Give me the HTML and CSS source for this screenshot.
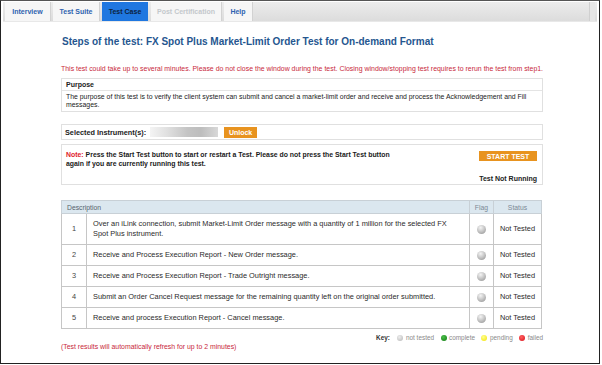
FILE: index.html
```html
<!DOCTYPE html>
<html>
<head>
<meta charset="utf-8">
<link rel="stylesheet" href="styles.css">
</head>
<body>
<div class="frame">
  <div class="tabbar">
    <a class="tab">Interview</a>
    <a class="tab">Test Suite</a>
    <a class="tab active">Test Case</a>
    <a class="tab disabled">Post Certification</a>
    <a class="tab">Help</a>
    <span class="tabbar-end"></span>
  </div>
  <div class="content">
    <h1 class="title">Steps of the test: FX Spot Plus Market-Limit Order Test for On-demand Format</h1>
    <p class="warning">This test could take up to several minutes. Please do not close the window during the test. Closing window/stopping test requires to rerun the test from step1.</p>
    <div class="box purpose">
      <div class="purpose-head">Purpose</div>
      <div class="purpose-body">The purpose of this test is to verify the client system can submit and cancel a market-limit order and receive and process the Acknowledgement and Fill messages.</div>
    </div>
    <div class="box instrument">
      <span class="label">Selected Instrument(s):</span>
      <span class="blurred"></span>
      <span class="btn unlock">Unlock</span>
    </div>
    <div class="box note">
      <div class="note-row">
        <div class="note-text">
          <div class="note-line"><span class="note-label">Note:</span><span class="note-first">Press the Start Test button to start or restart a Test. Please do not press the Start Test button</span></div>
          <div class="note-line">again if you are currently running this test.</div>
        </div>
        <span class="btn start">START TEST</span>
      </div>
      <div class="status-line">Test Not Running</div>
    </div>
    <table class="steps">
      <thead>
        <tr><th colspan="2" class="th-desc">Description</th><th class="th-flag">Flag</th><th class="th-status">Status</th></tr>
      </thead>
      <tbody>
        <tr class="tall"><td class="num">1</td><td class="desc">Over an iLink connection, submit Market-Limit Order message with a quantity of 1 million for the selected FX Spot Plus instrument.</td><td class="flag"><span class="bulb"></span></td><td class="status">Not Tested</td></tr>
        <tr><td class="num">2</td><td class="desc">Receive and Process Execution Report - New Order message.</td><td class="flag"><span class="bulb"></span></td><td class="status">Not Tested</td></tr>
        <tr><td class="num">3</td><td class="desc">Receive and Process Execution Report - Trade Outright message.</td><td class="flag"><span class="bulb"></span></td><td class="status">Not Tested</td></tr>
        <tr><td class="num">4</td><td class="desc">Submit an Order Cancel Request message for the remaining quantity left on the original order submitted.</td><td class="flag"><span class="bulb"></span></td><td class="status">Not Tested</td></tr>
        <tr><td class="num">5</td><td class="desc">Receive and process Execution Report - Cancel message.</td><td class="flag"><span class="bulb"></span></td><td class="status">Not Tested</td></tr>
      </tbody>
    </table>
    <div class="key">
      <span class="key-label">Key:</span>
      <span class="dot gray"></span><span>not tested</span>
      <span class="dot green"></span><span>complete</span>
      <span class="dot yellow"></span><span>pending</span>
      <span class="dot red"></span><span>failed</span>
    </div>
    <p class="footnote">(Test results will automatically refresh for up to 2 minutes)</p>
  </div>
</div>
</body>
</html>
```

FILE: styles.css
```css
* { box-sizing: border-box; }
html, body { margin: 0; padding: 0; background: #fff; }
body { font-family: "Liberation Sans", Arial, sans-serif; color: #222; }

.frame {
  width: 600px;
  height: 364px;
  border: 1px solid #222;
  border-top-color: #555;
  overflow: hidden;
}

.tabbar {
  display: flex;
  align-items: stretch;
  height: 20px;
  margin: 1px 2px 0 2px;
  background: linear-gradient(#ececec, #dcdcdc);
  border-bottom: 1px solid #e8e8e8;
  padding-left: 2px;
  gap: 2px;
}
.tab {
  display: flex;
  align-items: center;
  justify-content: center;
  background: #f6f6f6;
  border-right: 1px solid #d2d2d2;
  color: #2f63b0;
  font-weight: bold;
  font-size: 7px;
  padding: 0;
  white-space: nowrap;
  text-decoration: none;
}
.tab:nth-child(1) { width: 46px; }
.tab:nth-child(2) { width: 47px; }
.tab.active { width: 46px; background: #1f77e0; color: #0d2340; border-right: 0; }
.tab.disabled { width: 71px; color: #c4c8cc; margin-left: 1px; }
.tab:nth-child(5) { width: 29px; }
.tabbar-end { margin-left: auto; width: 6px; background: #e6e6e6; border-left: 1px solid #d0d0d0; margin-right: 2px; }

.content {
  width: 482px;
  margin-left: 60px;
}
.title {
  font-size: 10px;
  line-height: 13px;
  color: #25568f;
  margin: 13px 0 0 1px;
  font-weight: bold;
  white-space: nowrap;
}
.warning {
  font-size: 6.95px;
  line-height: 9px;
  color: #c8283a;
  margin: 16px 0 0 0;
  white-space: nowrap;
}
.box {
  border: 1px solid #e0e0e0;
  background: #fff;
}
.purpose { margin-top: 5px; }
.purpose-head {
  font-weight: bold;
  font-size: 7px;
  line-height: 11px;
  padding: 0 4px;
  border-bottom: 1px solid #e4e4e4;
}
.purpose-body {
  font-size: 6.9px;
  line-height: 8px;
  padding: 2px 4px 2px 4px;
  color: #222;
}

.instrument {
  margin-top: 12px;
  height: 16px;
  display: flex;
  align-items: center;
  padding-left: 3px;
}
.label { font-weight: bold; font-size: 7.3px; }
.blurred {
  width: 68px;
  height: 10px;
  margin-left: 4px;
  background: linear-gradient(90deg, #f4f4f4 0%, #e0e0e0 25%, #c4c4c4 55%, #bdbdbd 75%, #d8d8d8 100%);
}
.btn {
  background: #e8931f;
  color: #fff;
  font-weight: bold;
  font-size: 7px;
  display: inline-flex;
  align-items: center;
  justify-content: center;
}
.unlock { width: 33px; height: 11px; margin-left: 6px; }

.note {
  margin-top: 4px;
  height: 41px;
  padding: 6px 5px 0 4px;
  display: flex;
  flex-direction: column;
}
.note-row { display: flex; justify-content: space-between; align-items: flex-start; }
.note-text {
  font-size: 6.9px;
  line-height: 8.5px;
  font-weight: bold;
  width: 360px;
  color: #1a1a1a;
}
.note-line { display: flex; gap: 2px; white-space: nowrap; }
.note-label { color: #e0202a; }
.start { width: 58px; height: 10px; margin-top: 0; }
.status-line {
  margin-top: auto;
  margin-bottom: 1px;
  text-align: right;
  font-weight: bold;
  font-size: 7px;
  line-height: 9px;
}

.steps {
  margin-top: 15px;
  width: 481px;
  border-collapse: collapse;
  font-size: 7.4px;
  color: #2a2a2a;
}
.steps th {
  background: #dbe7ef;
  font-weight: normal;
  height: 13px;
  padding: 0 5px;
  border: 1px solid #c8d0d6;
  color: #7c8a95;
  font-size: 6.8px;
}
.steps th.th-desc { text-align: left; color: #56636d; }
.steps td {
  border: 1px solid #c6c6c6;
  height: 21px;
  padding: 0 6px;
  line-height: 10px;
}
.steps tr.tall td { height: 31px; }
.steps td.num { width: 25px; text-align: center; padding: 0; color: #444; }
.steps td.desc { padding-left: 6px; padding-right: 12px; }
.steps td.flag { width: 22px; text-align: center; padding: 0; }
.steps td.status { width: 48px; text-align: center; padding: 0; white-space: nowrap; }
.bulb {
  display: inline-block;
  width: 9px;
  height: 9px;
  border-radius: 50%;
  background: radial-gradient(circle at 40% 30%, #f4f4f4 0%, #c8c8c8 45%, #8e8e8e 100%);
  vertical-align: middle;
}

.key {
  display: flex;
  justify-content: flex-end;
  align-items: center;
  gap: 2.5px;
  margin-top: 4px;
  font-size: 6.4px;
  line-height: 9px;
  color: #8a8a8a;
}
.key-label { font-weight: bold; color: #333; margin-right: 1px; }
.dot { width: 6px; height: 6px; border-radius: 50%; margin-left: 4px; }
.dot.gray { background: radial-gradient(circle at 40% 35%, #eee, #b5b5b5); }
.dot.green { background: radial-gradient(circle at 40% 35%, #4bbf4b, #107a10); }
.dot.yellow { background: radial-gradient(circle at 40% 35%, #ffff90, #f2e200); }
.dot.red { background: radial-gradient(circle at 40% 35%, #ff6060, #d8101a); }

.footnote {
  margin: 0;
  font-size: 6.9px;
  line-height: 9px;
  color: #c8283a;
}
```
